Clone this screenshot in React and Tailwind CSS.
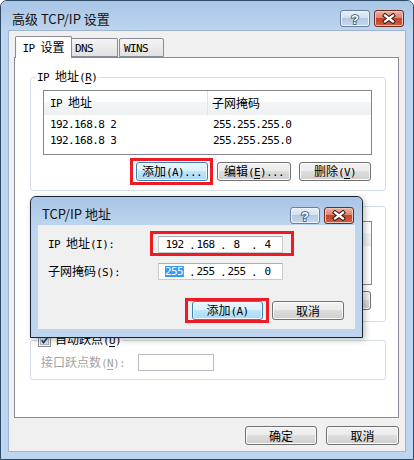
import React from "react";

const MONO = "font-['DejaVu_Sans_Mono',monospace] text-[11px] tracking-[-0.6px]";
const MONO_U =
  "font-['DejaVu_Sans_Mono',monospace] text-[11px] tracking-[-0.6px] underline underline-offset-[2px] decoration-1";

function T({ s }) {
  const runs = [];
  for (let i = 0; i < s.length; i++) {
    let ch = s[i];
    let u = false;
    if (ch === "&" && i + 1 < s.length) {
      u = true;
      i++;
      ch = s[i];
    }
    const type = u ? "u" : ch.charCodeAt(0) < 128 ? "a" : "c";
    const last = runs[runs.length - 1];
    if (last && last.type === type && type !== "u") last.text += ch;
    else runs.push({ type, text: ch });
  }
  return (
    <span className="whitespace-pre">
      {runs.map((r, i) =>
        r.type === "c" ? (
          <span key={i}>{r.text}</span>
        ) : (
          <span key={i} className={r.type === "u" ? MONO_U : MONO}>
            {r.text}
          </span>
        )
      )}
    </span>
  );
}

const BTN =
  "flex h-[19px] shrink-0 items-center justify-center rounded-[3px] border border-[#707070] bg-[linear-gradient(#f2f2f2_0%,#ebebeb_49%,#dddddd_50%,#cfcfcf_100%)] shadow-[inset_0_0_0_1px_#fbfbfb] leading-[17px]";
const BTN_BLUE =
  "flex h-[19px] shrink-0 items-center justify-center rounded-[3px] border border-[#3c7fb1] bg-[linear-gradient(#eaf6fd_0%,#d9f0fc_49%,#bee6fd_50%,#a7d9f5_100%)] shadow-[inset_0_0_0_1px_#f2fbff] leading-[17px]";

function CaptionButtons() {
  return (
    <div className="flex gap-[4px]">
      <div className="flex h-[17px] w-[30px] items-center justify-center rounded-[3px] border border-[#6b7f98] bg-[linear-gradient(#e8f0f9_0%,#d2e0f0_45%,#b3cae5_50%,#c5d9ef_100%)] shadow-[inset_0_0_0_1px_#eef4fb]">
        <svg width="12" height="15" viewBox="0 0 12 15">
          <text
            x="6"
            y="12.5"
            textAnchor="middle"
            fontSize="13"
            fontWeight="bold"
            fontFamily="Liberation Sans, sans-serif"
            fill="#ffffff"
            stroke="#3a4c63"
            strokeWidth="1.6"
            paintOrder="stroke"
          >
            ?
          </text>
        </svg>
      </div>
      <div className="flex h-[17px] w-[30px] items-center justify-center rounded-[3px] border border-[#6b2c22] bg-[linear-gradient(#ebb3a5_0%,#db8672_45%,#c4452c_50%,#d25c40_100%)] shadow-[inset_0_0_0_1px_#f0c4b8]">
        <svg width="16" height="11" viewBox="0 0 16 11">
          <path d="M4 2.5 L12 8.5 M12 2.5 L4 8.5" stroke="#3a1810" strokeWidth="4.2" strokeLinecap="square" />
          <path d="M4 2.5 L12 8.5 M12 2.5 L4 8.5" stroke="#ffffff" strokeWidth="2.2" strokeLinecap="square" />
        </svg>
      </div>
    </div>
  );
}

function ListView({ h1, h2, rows, heightClass }) {
  return (
    <div className={"w-[329px] border border-[#828790] bg-white " + heightClass}>
      <div className="flex h-[24px] bg-[linear-gradient(#ffffff_0%,#ffffff_45%,#f4f5f7_46%,#eff0f2_100%)]">
        <div className="flex w-[164px] items-center border-r border-[#dfe2e8] pl-[6px]">
          <T s={h1} />
        </div>
        <div className="flex flex-1 items-center pl-[4px]">
          <T s={h2} />
        </div>
      </div>
      <div className="pt-[1px]">
        {rows.map((r, i) => (
          <div key={i} className="flex h-[16px] items-center">
            <div className="w-[164px] pl-[6px]">
              <T s={r[0]} />
            </div>
            <div className="pl-[5px]">
              <T s={r[1]} />
            </div>
          </div>
        ))}
      </div>
    </div>
  );
}

function IpBox({ parts, selFirst }) {
  return (
    <div className="flex h-[17px] w-[125px] shrink-0 items-center border border-[#c6cad1] border-t-[#abadb3] bg-white pl-[4px] leading-[11px]">
      {parts.map((p, i) => (
        <React.Fragment key={i}>
          <div className="flex w-[23px] justify-center">
            {selFirst && i === 0 ? (
              <span className={"border-r border-[#d9822b] bg-[#3399ff] text-white " + MONO}>{p}</span>
            ) : (
              <span className={MONO}>{p}</span>
            )}
          </div>
          {i < 3 && (
            <div className="w-[8px] pl-[3px]">
              <span className={MONO}>.</span>
            </div>
          )}
        </React.Fragment>
      ))}
    </div>
  );
}

function CheckBox() {
  return (
    <svg width="13" height="13" viewBox="0 0 13 13">
      <rect x="0.5" y="0.5" width="12" height="12" fill="#f4f4f4" stroke="#8e8f8f" />
      <rect x="2.5" y="2.5" width="8" height="8" fill="#dde4ec" stroke="#b2b9c2" />
      <path d="M3.8 6.3 L5.6 8.6 L9.3 3.8" fill="none" stroke="#1f3a73" strokeWidth="1.6" />
    </svg>
  );
}

export default function App() {
  return (
    <div className="relative flex h-[460px] w-[414px] flex-col overflow-hidden rounded-t-[7px] border border-[#2d4a66] bg-[#bdd5ee] font-['Noto_Sans_CJK_SC',sans-serif] text-[12px] leading-[14px] text-black">
      {/* title bar */}
      <div className="flex h-[29px] shrink-0 bg-[linear-gradient(#a9c5e6,#bdd5ee)]">
        <div className="pl-[11px] pt-[9px] text-[13px] leading-[18px] text-[#111]">高级 TCP/IP 设置</div>
        <div className="ml-auto mr-[9px] mt-[9px]">
          <CaptionButtons />
        </div>
      </div>

      {/* client */}
      <div className="mx-[7px] flex h-[422px] flex-col border border-[#9fb5cf] bg-[#f0f0f0] pl-[5px] pt-[5px]">
        {/* tabs */}
        <div className="relative z-10 -mb-[1px] flex h-[22px] items-end">
          <div className="ml-[1px] flex h-[22px] w-[57px] items-center justify-center rounded-t-[2px] border border-b-0 border-[#898c95] bg-white">
            <T s="IP 设置" />
          </div>
          <div className="mb-[1px] flex h-[19px] w-[46px] items-center rounded-tr-[2px] border border-l-0 border-[#898c95] bg-[linear-gradient(#f4f4f4,#e1e1e1)] pl-[3px]">
            <T s="DNS" />
          </div>
          <div className="mb-[1px] ml-[1px] flex h-[19px] w-[45px] items-center rounded-t-[2px] border border-[#898c95] bg-[linear-gradient(#f4f4f4,#e1e1e1)] pl-[4px]">
            <T s="WINS" />
          </div>
        </div>

        {/* tab panel */}
        <div className="flex h-[361px] w-[385px] flex-col border border-[#898c95] bg-white">
          {/* group 1 */}
          <fieldset className="ml-[15px] mt-[11px] w-[356px] rounded-[3px] border border-[#d5dfe5]">
            <legend className="ml-[5px] px-[1px] leading-[14px]">
              <T s="IP 地址(&R)" />
            </legend>
            <div className="pb-[5px] pl-[12px] pr-[13px] pt-[5px]">
              <ListView
                h1="IP 地址"
                h2="子网掩码"
                heightClass="h-[65px]"
                rows={[
                  ["192.168.8 2", "255.255.255.0"],
                  ["192.168.8 3", "255.255.255.0"],
                ]}
              />
              <div className="mt-[3px] flex items-center justify-end pr-[1px]">
                <div className="border-[3px] border-[#ed1c24] py-[1px] pl-[3px] pr-[2px]">
                  <div className={BTN_BLUE + " w-[72px]"}>
                    <T s="添加(A)..." />
                  </div>
                </div>
                <div className={BTN + " ml-[4px] w-[74px]"}>
                  <T s="编辑(&E)..." />
                </div>
                <div className={BTN + " ml-[8px] w-[72px]"}>
                  <T s="删除(&V)" />
                </div>
              </div>
            </div>
          </fieldset>

          {/* group 2 (mostly hidden behind the dialog) */}
          <fieldset className="ml-[15px] mt-[7px] w-[356px] rounded-[3px] border border-[#d5dfe5]">
            <legend className="ml-[5px] px-[1px] leading-[14px]">
              <T s="默认网关(&F):" />
            </legend>
            <div className="pb-[11px] pl-[12px] pr-[13px] pt-[7px]">
              <ListView h1="网关" h2="跃点数" heightClass="h-[64px]" rows={[]} />
              <div className="mt-[6px] flex items-center justify-end pr-[1px]">
                <div className={BTN + " w-[72px]"}>
                  <T s="添加(&D)..." />
                </div>
                <div className={BTN + " ml-[9px] w-[74px]"}>
                  <T s="编辑(&T)..." />
                </div>
                <div className={BTN + " ml-[8px] w-[72px]"}>
                  <T s="删除(&M)" />
                </div>
              </div>
            </div>
          </fieldset>

          {/* group 3 */}
          <fieldset className="ml-[15px] mt-[10px] w-[356px] rounded-[3px] border border-[#d5dfe5]">
            <legend className="ml-[6px] flex items-center gap-[4px] pl-[1px] pr-[2px] leading-[14px]">
              <CheckBox />
              <T s="自动跃点(&U)" />
            </legend>
            <div className="flex items-center pb-[8px] pl-[10px] pt-[6px]">
              <div className="w-[97px] text-[#a3a3a3]">
                <T s="接口跃点数(&N):" />
              </div>
              <div className="h-[17px] w-[76px] border border-[#b9bdc3] bg-white" />
            </div>
          </fieldset>
        </div>

        {/* bottom buttons */}
        <div className="mt-[8px] flex w-[385px] justify-end gap-[9px]">
          <div className={BTN + " w-[72px]"}>
            <T s="确定" />
          </div>
          <div className={BTN + " w-[73px]"}>
            <T s="取消" />
          </div>
        </div>
      </div>

      {/* overlaid dialog: TCP/IP 地址 */}
      <div className="absolute left-[29px] top-[195px] flex h-[142px] w-[333px] flex-col rounded-t-[6px] border border-[#1a2430] bg-[#bdd5ee] shadow-[2px_2px_6px_rgba(0,0,0,0.25)]">
        <div className="flex h-[28px] shrink-0 rounded-t-[6px] bg-[linear-gradient(#a9c5e6,#bdd5ee)]">
          <div className="pl-[11px] pt-[8px] text-[13px] leading-[18px] text-[#111]">TCP/IP 地址</div>
          <div className="ml-auto mr-[8px] mt-[10px]">
            <CaptionButtons />
          </div>
        </div>
        <div className="mx-[7px] mb-[8px] flex flex-1 flex-col bg-[#f0f0f0]">
          <div className="mt-[6px] flex items-center">
            <div className="w-[112px] pl-[10px]">
              <T s="IP 地址(I):" />
            </div>
            <div className="border-[3px] border-[#ed1c24] pb-0 pl-[5px] pr-[8px] pt-[2px]">
              <IpBox parts={["192", "168", "8", "4"]} />
            </div>
          </div>
          <div className="mt-[7px] flex items-center">
            <div className="w-[112px] pl-[10px]">
              <T s="子网掩码(S):" />
            </div>
            <div className="ml-[8px]">
              <IpBox parts={["255", "255", "255", "0"]} selFirst />
            </div>
          </div>
          <div className="mt-[18px] flex items-center justify-end pr-[11px]">
            <div className="border-[3px] border-[#ed1c24] pl-[4px] pr-[3px]">
              <div className={BTN_BLUE + " w-[71px]"}>
                <T s="添加(A)" />
              </div>
            </div>
            <div className={BTN + " ml-[3px] w-[72px]"}>
              <T s="取消" />
            </div>
          </div>
        </div>
      </div>
    </div>
  );
}
